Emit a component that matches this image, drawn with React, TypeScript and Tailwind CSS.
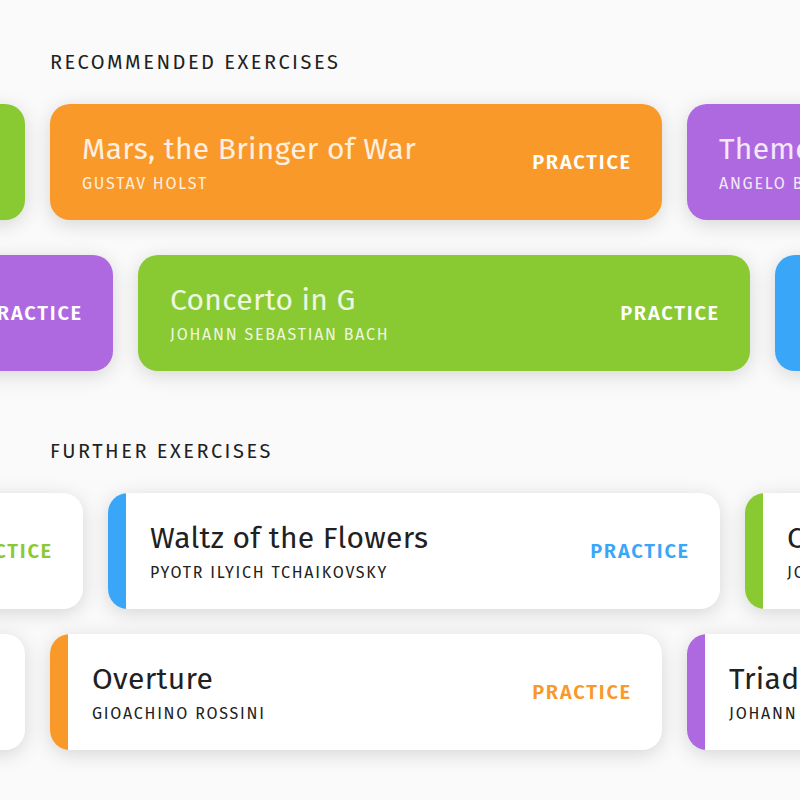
import React from "react";

type Tone = "green" | "orange" | "purple" | "blue";

type Exercise = { title: string; composer: string; tone: Tone };

const fills: Record<Tone, string> = {
  green: "bg-[#89c931]",
  orange: "bg-[#f9992a]",
  purple: "bg-[#ae69e0]",
  blue: "bg-[#3aa6f8]",
};

const inks: Record<Tone, string> = {
  green: "text-[#89c931]",
  orange: "text-[#f9992a]",
  purple: "text-[#ae69e0]",
  blue: "text-[#3aa6f8]",
};

const recommended: { offset: string; items: Exercise[] }[] = [
  {
    offset: "-ml-[587px]",
    items: [
      { title: "Air", composer: "Johann Sebastian Bach", tone: "green" },
      { title: "Mars, the Bringer of War", composer: "Gustav Holst", tone: "orange" },
      { title: "Theme of Twin Peaks", composer: "Angelo Badalamenti", tone: "purple" },
    ],
  },
  {
    offset: "-ml-[499px]",
    items: [
      { title: "Nocturne", composer: "Frédéric Chopin", tone: "purple" },
      { title: "Concerto in G", composer: "Johann Sebastian Bach", tone: "green" },
      { title: "Spring", composer: "Antonio Vivaldi", tone: "blue" },
    ],
  },
];

const further: { offset: string; items: Exercise[] }[] = [
  {
    offset: "-ml-[529px]",
    items: [
      { title: "Minuet", composer: "Luigi Boccherini", tone: "green" },
      { title: "Waltz of the Flowers", composer: "Pyotr Ilyich Tchaikovsky", tone: "blue" },
      { title: "Canon", composer: "Johann Pachelbel", tone: "green" },
    ],
  },
  {
    offset: "-ml-[587px]",
    items: [
      { title: "Habanera", composer: "Georges Bizet", tone: "blue" },
      { title: "Overture", composer: "Gioachino Rossini", tone: "orange" },
      { title: "Triads", composer: "Johann Pachelbel", tone: "purple" },
    ],
  },
];

function Card({ exercise, solid }: { exercise: Exercise; solid: boolean }) {
  const { title, composer, tone } = exercise;
  return (
    <article
      className={`flex w-[612px] shrink-0 overflow-hidden rounded-[20px] shadow-[0_4px_20px_rgba(0,0,0,0.15)] ${solid ? `${fills[tone]} text-white` : "bg-white text-[#212121]"}`}
    >
      {!solid && <div className={`w-[18px] shrink-0 ${fills[tone]}`} />}
      <div
        className={`flex grow items-center justify-between py-[23px] pr-[30px] ${solid ? "pl-8" : "pl-6"}`}
      >
        <div className={solid ? "opacity-85" : ""}>
          <h3 className="text-[30px] leading-[44px] tracking-[0.01em]">{title}</h3>
          <p className="text-[16px] leading-[26px] tracking-[0.11em] uppercase">{composer}</p>
        </div>
        <button
          type="button"
          className={`text-[20px] leading-[28px] font-semibold tracking-[0.09em] uppercase ${solid ? "text-white" : inks[tone]}`}
        >
          Practice
        </button>
      </div>
    </article>
  );
}

export default function App() {
  return (
    <main className="min-h-screen overflow-hidden bg-[#fafafa] pt-12 pb-[50px] font-['Fira_Sans','Noto_Sans',sans-serif] text-[#212121]">
      <section>
        <h2 className="px-[50px] text-[20px] leading-[28px] tracking-[0.125em] uppercase">Recommended Exercises</h2>
        <div className="mt-7 flex flex-col gap-[35px]">
          {recommended.map((row, i) => (
            <div key={i} className={`flex gap-[25px] ${row.offset}`}>
              {row.items.map((item) => (
                <Card key={item.title} exercise={item} solid />
              ))}
            </div>
          ))}
        </div>
      </section>
      <section className="mt-[66px]">
        <h2 className="px-[50px] text-[20px] leading-[28px] tracking-[0.125em] uppercase">Further Exercises</h2>
        <div className="mt-7 flex flex-col gap-[25px]">
          {further.map((row, i) => (
            <div key={i} className={`flex gap-[25px] ${row.offset}`}>
              {row.items.map((item) => (
                <Card key={item.title} exercise={item} solid={false} />
              ))}
            </div>
          ))}
        </div>
      </section>
    </main>
  );
}
